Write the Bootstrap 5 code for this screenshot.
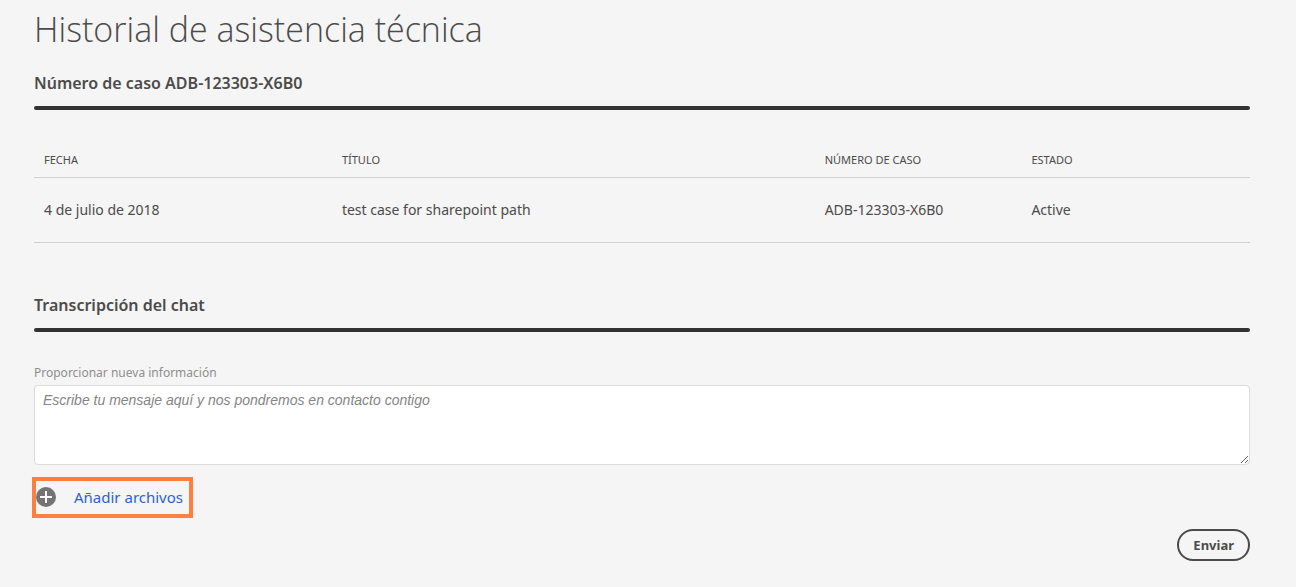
<!DOCTYPE html>
<html lang="es">
<head>
<meta charset="utf-8">
<meta name="viewport" content="width=device-width, initial-scale=1">
<title>Historial de asistencia técnica</title>
<link href="https://cdn.jsdelivr.net/npm/bootstrap@5.3.0/dist/css/bootstrap.min.css" rel="stylesheet">
<style>
body { background: #f5f5f5; color: #4b4b4b; font-family: "Noto Sans", "Open Sans", sans-serif; font-size: 14px; line-height: 20px; }
.page { padding: 6px 46px 24px 34px; }
h1 { font-family: "Open Sans", "Noto Sans", sans-serif; font-size: 34px; line-height: 46px; font-weight: 300; margin-bottom: 19px; }
.section-title { font-size: 16px; line-height: 24px; font-weight: 600; margin-bottom: 33px; }
.section-title::after { content: ""; display: block; height: 4px; margin-top: 11px; border-radius: 2px; background: #323232; }
.case-table { --bs-table-bg: transparent; --bs-table-color: #4b4b4b; color: #4b4b4b; table-layout: fixed; border-color: #d0d0d0; margin-bottom: 50px; }
.case-table th { font-size: 11px; line-height: 16px; font-weight: 400; padding: 9px 10px; text-transform: uppercase; }
.case-table td { padding: 22px 10px; }
.col-date { width: 24.5%; }
.col-title { width: 39.7%; }
.col-case { width: 17%; }
.form-label { display: block; font-size: 12px; line-height: 16px; color: #8e8e8e; }
.message { font: italic 14px/18px "Liberation Sans", sans-serif; height: 80px; padding: 5px 8px; border-color: #dcdcdc; border-radius: 4px; }
.message::placeholder { color: #858585; }
.add-files { border: 4px solid #ff7f41; margin: 12px 0 11px -2px; padding: 4px 6px 5px 0; gap: 18px; font-size: 15px; line-height: 24px; color: #2b63cd; }
.send { border: 2px solid #4b4b4b; color: #4b4b4b; font-size: 13px; line-height: 20px; font-weight: 700; padding: 4px 14px; }
</style>
</head>
<body>
<main class="page">
  <h1>Historial de asistencia técnica</h1>
  <h2 class="section-title">Número de caso ADB-123303-X6B0</h2>
  <table class="table case-table">
    <colgroup><col class="col-date"><col class="col-title"><col class="col-case"><col></colgroup>
    <thead><tr><th scope="col">Fecha</th><th scope="col">Título</th><th scope="col">Número de caso</th><th scope="col">Estado</th></tr></thead>
    <tbody><tr><td>4 de julio de 2018</td><td>test case for sharepoint path</td><td>ADB-123303-X6B0</td><td>Active</td></tr></tbody>
  </table>
  <h2 class="section-title">Transcripción del chat</h2>
  <form>
    <label class="form-label mb-1" for="message">Proporcionar nueva información</label>
    <textarea class="form-control message" id="message" placeholder="Escribe tu mensaje aquí y nos pondremos en contacto contigo"></textarea>
    <div class="d-flex">
      <a href="#" class="add-files d-inline-flex align-items-center text-decoration-none">
        <svg width="20" height="20" viewBox="0 0 20 20" aria-hidden="true"><circle cx="10" cy="10" r="10" fill="#747474"/><path d="M10 4v12M4 10h12" stroke="#fff" stroke-width="2"/></svg>
        Añadir archivos
      </a>
    </div>
    <div class="d-flex justify-content-end">
      <button type="submit" class="send rounded-pill bg-transparent">Enviar</button>
    </div>
  </form>
</main>
<script src="https://cdn.jsdelivr.net/npm/bootstrap@5.3.0/dist/js/bootstrap.bundle.min.js"></script>
</body>
</html>
